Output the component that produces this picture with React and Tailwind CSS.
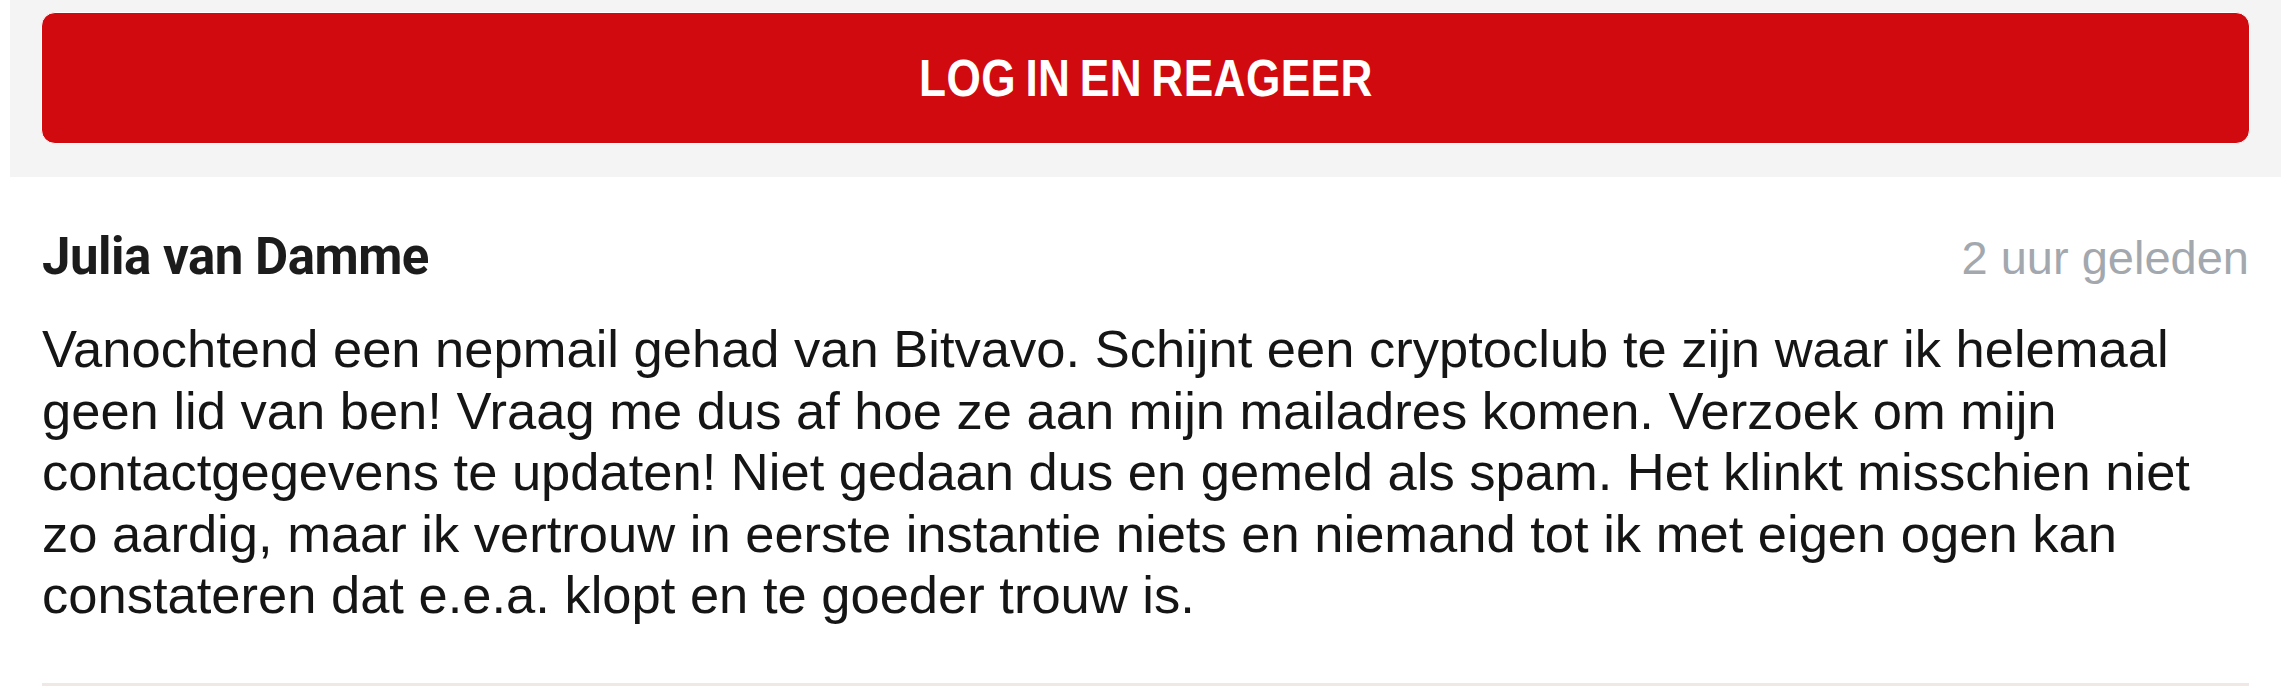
export default function App() {
  return (
    <div className="min-h-screen bg-white">
      <div className="ml-[10px] w-[2271px]">
        {/* Login bar */}
        <div className="bg-[#f4f4f4] px-[31px] pt-[12px] pb-[33px]">
          <button className="flex h-[132px] w-full items-center justify-center rounded-[14px] border border-white bg-[#d10a10] text-white">
            <span
              className="inline-block scale-x-[0.85] text-[52px] font-bold uppercase leading-none tracking-[0.5px] [word-spacing:-4px]"
              style={{ fontFamily: '"Liberation Sans", Arial, sans-serif' }}
            >
              LOG IN EN REAGEER
            </span>
          </button>
        </div>

        {/* Comment */}
        <div className="px-[32px]">
          <div className="flex items-baseline justify-between pt-[50px]">
            <h3
              className="text-[51px] font-bold leading-[60px] tracking-[-0.5px] text-[#1c1c1c]"
              style={{ fontFamily: 'Roboto, "Liberation Sans", sans-serif' }}
            >
              Julia van Damme
            </h3>
            <span
              className="text-[47px] leading-[60px] text-[#a3a8ae]"
              style={{ fontFamily: '"Liberation Sans", Arial, sans-serif' }}
            >
              2 uur geleden
            </span>
          </div>
          <p
            className="mt-[30px] text-[52.5px] leading-[61.5px] text-[#151515]"
            style={{ fontFamily: '"Liberation Sans", Arial, sans-serif' }}
          >
            Vanochtend een nepmail gehad van Bitvavo. Schijnt een cryptoclub te zijn waar ik helemaal geen lid van ben! Vraag me dus af hoe ze aan mijn mailadres komen. Verzoek om mijn contactgegevens te updaten! Niet gedaan dus en gemeld als spam. Het klinkt misschien niet zo aardig, maar ik vertrouw in eerste instantie niets en niemand tot ik met eigen ogen kan constateren dat e.e.a. klopt en te goeder trouw is.
          </p>
          <div className="mt-[57px] h-[3px] bg-[#efe8e4]" />
        </div>
      </div>
    </div>
  );
}
